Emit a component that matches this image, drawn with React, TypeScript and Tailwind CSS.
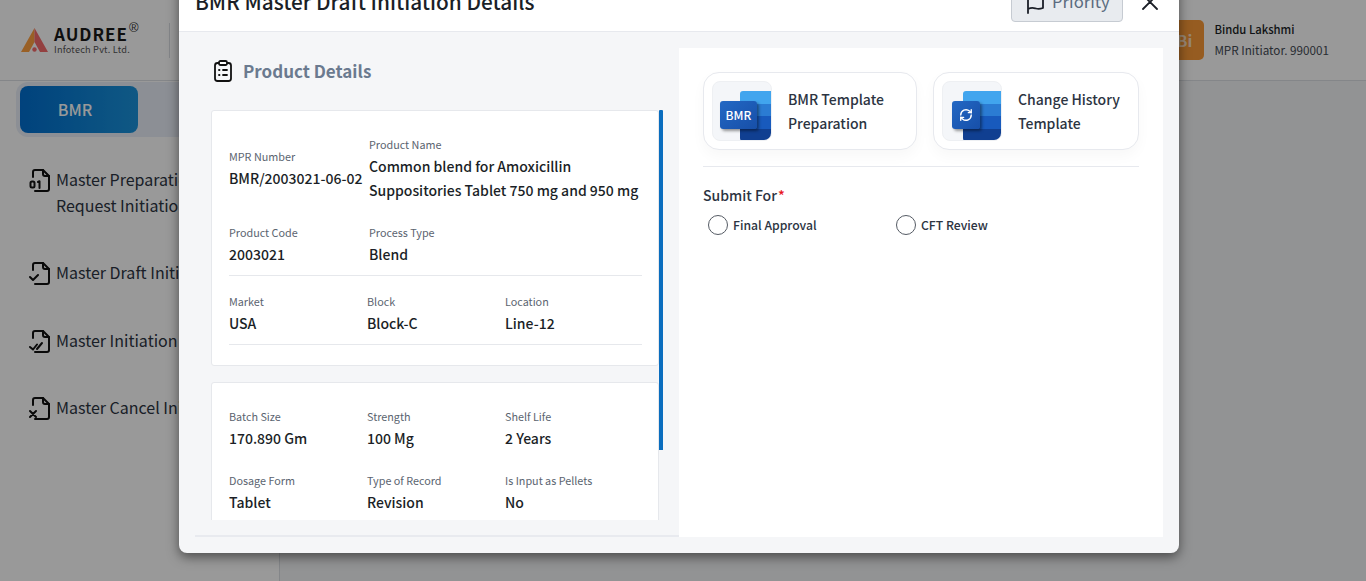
const font = { fontFamily: '"Noto Sans CJK SC", "Noto Sans", sans-serif' };

function DocIcon({ kind }: { kind: "num" | "check" | "double" | "cross" }) {
  return (
    <svg width="22" height="24" viewBox="0 0 22 24" fill="none" stroke="#111" strokeWidth="2" strokeLinecap="round" strokeLinejoin="round" className="shrink-0">
      <path d="M4 9V4a2 2 0 0 1 2-2h8l6 6v13a2 2 0 0 1-2 2H6" />
      <path d="M14 2v4a2 2 0 0 0 2 2h4" />
      {kind === "num" && (
        <>
          <rect x="1.5" y="13.5" width="4" height="6" rx="1.5" />
          <path d="M9 14l1.5-.8V20" />
        </>
      )}
      {kind === "check" && <path d="M1 16l3 3 5-5" />}
      {kind === "double" && (
        <>
          <path d="M1 18l3 2.5 4-5" />
          <path d="M8 20l5-6" />
        </>
      )}
      {kind === "cross" && <path d="M1 15l6 6M7 15l-6 6" />}
    </svg>
  );
}

function SideItem({ kind, lines }: { kind: "num" | "check" | "double" | "cross"; lines: string[] }) {
  return (
    <div className="flex gap-[5px]">
      <div className="pt-[2px]">
        <DocIcon kind={kind} />
      </div>
      <div className="text-[16px] leading-[26px] text-[#2c3442] whitespace-nowrap">
        {lines.map((l) => (
          <div key={l}>{l}</div>
        ))}
      </div>
    </div>
  );
}

function Field({ label, value, className }: { label: string; value: string; className?: string }) {
  return (
    <div className={className}>
      <div className="text-[10.8px] leading-[14px] text-[#5b6470]">{label}</div>
      <div className="mt-[3px] text-[14px] leading-[24px] font-medium text-[#1b1f27]">{value}</div>
    </div>
  );
}

function WordIcon({ children, small }: { children: React.ReactNode; small?: boolean }) {
  return (
    <div className="relative w-[60px] h-[60px] rounded-lg bg-[#f4f6f9] border border-[#eef0f3] shrink-0 overflow-hidden">
      <div className={`absolute top-[9px] right-0 h-[50px] rounded-l-[3px] rounded-br-[3px] overflow-hidden flex flex-col ${small ? "w-[38px]" : "w-[31px]"}`}>
        <div className="flex-1 bg-[#41a5ee]"></div>
        <div className="flex-1 bg-[#2b7cd3]"></div>
        <div className="flex-1 bg-[#185abd]"></div>
        <div className="flex-1 bg-[#103f91]"></div>
      </div>
      <div className={`absolute top-[19px] rounded-[3px] bg-gradient-to-br from-[#2368c4] to-[#174fa8] shadow-[2px_2px_3px_rgba(0,0,0,0.4)] flex items-center justify-center text-white ${small ? "left-[9px] w-[28px] h-[28px]" : "left-[7px] w-[37px] h-[28px]"}`}>
        {children}
      </div>
    </div>
  );
}

function TemplateCard({ icon, lines, width }: { icon: React.ReactNode; lines: string[]; width: string }) {
  return (
    <div className={`h-[78px] rounded-2xl border border-[#e7e9ee] bg-white flex items-center gap-4 px-2 shadow-[0_6px_14px_rgba(0,0,0,0.03)] ${width}`}>
      {icon}
      <div className="text-[14px] leading-[24px] font-medium text-[#2c3442] whitespace-nowrap">
        {lines.map((l) => (
          <div key={l}>{l}</div>
        ))}
      </div>
    </div>
  );
}

function Radio({ label, width }: { label: string; width: string }) {
  return (
    <div className={`flex items-center gap-[5px] ${width}`}>
      <span className="w-5 h-5 rounded-full border border-[#555b64] bg-white shrink-0"></span>
      <span className="text-[12.2px] leading-[20px] font-medium text-[#2c3442]">{label}</span>
    </div>
  );
}

export default function App() {
  return (
    <div className="relative w-[1366px] h-[581px] overflow-hidden bg-[#f4f5f7]" style={font}>
      {/* page behind the dialog */}
      <header className="h-[81px] bg-white border-b border-[#dcdfe4] flex items-center pl-[21px] pr-[37px]">
        <svg width="27" height="25" viewBox="0 0 27 25" className="shrink-0">
          <path d="M13.5 0L0 24h8L13.5 14z" fill="#ffa040" />
          <path d="M13.5 0L27 24h-8L13.5 14z" fill="#f56b6b" />
          <circle cx="13.5" cy="21.5" r="2.2" fill="#f56b6b" />
        </svg>
        <div className="ml-[6px] w-[88px] h-[30px] relative">
          <div className="text-[17px] leading-[18px] font-bold text-[#1a1a1a] tracking-[1px]">AUDREE</div>
          <div className="text-[9.2px] leading-[12px] text-[#555] tracking-[0.2px] whitespace-nowrap">Infotech Pvt. Ltd.</div>
          <span className="absolute left-[75px] top-[-3px] font-['Liberation_Sans'] text-[13px] leading-[12px] text-[#333]">®</span>
        </div>
        <div className="ml-[27px] w-px h-[35px] bg-[#dcdfe4]"></div>
        <div className="ml-auto flex items-center gap-[10px]">
          <div className="w-10 h-10 rounded-[5px] bg-[#fb9a38] flex items-center justify-center text-white/70 font-bold text-[16px]">Bi</div>
          <div>
            <div className="-mt-px text-[11.3px] leading-[20px] font-medium text-[#1b1f27]">Bindu Lakshmi</div>
            <div className="text-[11.7px] leading-[21px] text-[#444b55]">MPR Initiator. 990001</div>
          </div>
        </div>
      </header>
      <div className="flex h-[500px]">
        <aside className="w-[280px] bg-white border-r border-[#dcdfe4] shrink-0">
          <div className="mt-px ml-4 w-[264px] h-[55px] rounded-xl bg-[#e9eff8] p-1">
            <div className="w-[118px] h-[47px] rounded-lg bg-gradient-to-r from-[#026fd0] to-[#1a93dc] flex items-center justify-center pr-2 pb-[2px] text-white text-[16px] font-medium">BMR</div>
          </div>
          <div className="mt-[29px] ml-[29px] flex flex-col gap-[41px]">
            <SideItem kind="num" lines={["Master Preparation", "Request Initiation"]} />
            <SideItem kind="check" lines={["Master Draft Initiation"]} />
            <div className="mt-px">
              <SideItem kind="double" lines={["Master Initiation"]} />
            </div>
            <SideItem kind="cross" lines={["Master Cancel Initiation"]} />
          </div>
        </aside>
      </div>

      <div className="absolute inset-0 bg-black/40"></div>

      {/* dialog */}
      <div className="absolute left-[179px] top-[-30px] w-[1000px] h-[583px] rounded-lg bg-[#f5f6f8] shadow-[0_4px_12px_rgba(0,0,0,0.5)] flex flex-col overflow-hidden">
        <div className="h-[62px] shrink-0 bg-white border-b border-[#e7e9ee] flex items-start pl-4 pr-[21px] pt-[17px]">
          <div className="text-[20.8px] leading-[28px] font-medium text-[#1b1f27] whitespace-nowrap">BMR Master Draft Initiation Details</div>
          <div className="ml-auto w-[112px] h-[38px] -mt-[3px] rounded-[4px] bg-[#e8ebef] border border-[#c6cbd2] flex items-center pl-[14px] gap-[6px]">
            <svg width="20" height="22" viewBox="0 0 20 22" fill="none" stroke="#1b1f27" strokeWidth="1.8" strokeLinecap="round" strokeLinejoin="round">
              <path d="M2 21V0c4-2 6 0 8 .5s4 .5 7-.5v16c-3 1-5 1-7 .5S6 15 2 17" />
            </svg>
            <span className="-mt-1 text-[16.7px] leading-[24px] text-[#5b6b80]">Priority</span>
          </div>
          <svg width="16" height="16" viewBox="0 0 16 16" fill="none" stroke="#1b1f27" strokeWidth="1.8" strokeLinecap="round" className="ml-[19px] mt-[7px]">
            <path d="M1 1l14 14M15 1L1 15" />
          </svg>
        </div>

        <div className="flex-1 min-h-0 flex pl-4 pr-4 pt-[16px] pb-[16px]">
          <div className="w-[484px] shrink-0 flex flex-col border-b-2 border-[#e8eaef]">
            <div className="h-[46px] flex items-center gap-[10px] pl-[18px] shrink-0">
              <svg width="20" height="22" viewBox="0 0 20 22" fill="none" stroke="#111" strokeWidth="1.8" strokeLinecap="round" strokeLinejoin="round">
                <rect x="2" y="3" width="16" height="18" rx="2.5" />
                <rect x="6" y="1" width="8" height="4" rx="1.5" fill="white" />
                <path d="M6 10h.5M10 10h4M6 15h.5M10 15h4" />
              </svg>
              <span className="text-[17px] leading-[28px] font-semibold text-[#6b7a8f]">Product Details</span>
            </div>
            <div className="mt-[16px] h-[410px] flex items-start pl-4 overflow-hidden shrink-0">
              <div className="w-[448px] shrink-0 flex flex-col gap-4">
                <div className="h-[256px] shrink-0 rounded-[3px] bg-white border border-[#e6e8ec] pl-[17px] pr-4">
                  <div className="mt-[26px] flex items-center">
                    <Field label="MPR Number" value="BMR/2003021-06-02" className="w-[140px] whitespace-nowrap" />
                    <div>
                      <div className="text-[10.8px] leading-[14px] text-[#5b6470]">Product Name</div>
                      <div className="mt-[3px] text-[14px] leading-[24px] font-medium text-[#1b1f27] whitespace-nowrap">
                        <div>Common blend for Amoxicillin</div>
                        <div>Suppositories Tablet 750 mg and 950 mg</div>
                      </div>
                    </div>
                  </div>
                  <div className="mt-[23px] flex pb-[9px] border-b border-[#e6e8ec]">
                    <Field label="Product Code" value="2003021" className="w-[140px]" />
                    <Field label="Process Type" value="Blend" />
                  </div>
                  <div className="mt-[18px] flex pb-[9px] border-b border-[#e6e8ec]">
                    <Field label="Market" value="USA" className="w-[138px]" />
                    <Field label="Block" value="Block-C" className="w-[138px]" />
                    <Field label="Location" value="Line-12" />
                  </div>
                </div>
                <div className="h-[200px] shrink-0 rounded-[3px] bg-white border border-[#e6e8ec] pl-[17px] pr-4 pt-[26px]">
                  <div className="flex">
                    <Field label="Batch Size" value="170.890 Gm" className="w-[138px]" />
                    <Field label="Strength" value="100 Mg" className="w-[138px]" />
                    <Field label="Shelf Life" value="2 Years" />
                  </div>
                  <div className="mt-[23px] flex">
                    <Field label="Dosage Form" value="Tablet" className="w-[138px]" />
                    <Field label="Type of Record" value="Revision" className="w-[138px]" />
                    <Field label="Is Input as Pellets" value="No" />
                  </div>
                </div>
              </div>
              <div className="w-1 h-[340px] shrink-0 bg-[#0a6dbe] rounded-t-[1px]"></div>
            </div>
          </div>

          <div className="w-[484px] shrink-0 bg-white px-6 pt-6">
            <div className="flex gap-4 pb-4 border-b border-[#e7e9ee]">
              <TemplateCard
                width="w-[214px]"
                lines={["BMR Template", "Preparation"]}
                icon={
                  <WordIcon>
                    <span className="text-[12px] leading-[16px] font-medium">BMR</span>
                  </WordIcon>
                }
              />
              <TemplateCard
                width="w-[206px]"
                lines={["Change History", "Template"]}
                icon={
                  <WordIcon small>
                    <svg width="14" height="14" viewBox="0 0 24 24" fill="none" stroke="white" strokeWidth="2.4" strokeLinecap="round" strokeLinejoin="round">
                      <path d="M3 12a9 9 0 0 1 15-6.7L21 8" />
                      <path d="M21 3v5h-5" />
                      <path d="M21 12a9 9 0 0 1-15 6.7L3 16" />
                      <path d="M3 21v-5h5" />
                    </svg>
                  </WordIcon>
                }
              />
            </div>
            <div className="mt-[17px] text-[14px] leading-[22px] font-medium text-[#2c3442]">
              Submit For<span className="text-[#e8141c] ml-px">*</span>
            </div>
            <div className="mt-[9px] pl-[5px] flex">
              <Radio label="Final Approval" width="w-[188px]" />
              <Radio label="CFT Review" width="w-[120px]" />
            </div>
          </div>
        </div>
      </div>
    </div>
  );
}
